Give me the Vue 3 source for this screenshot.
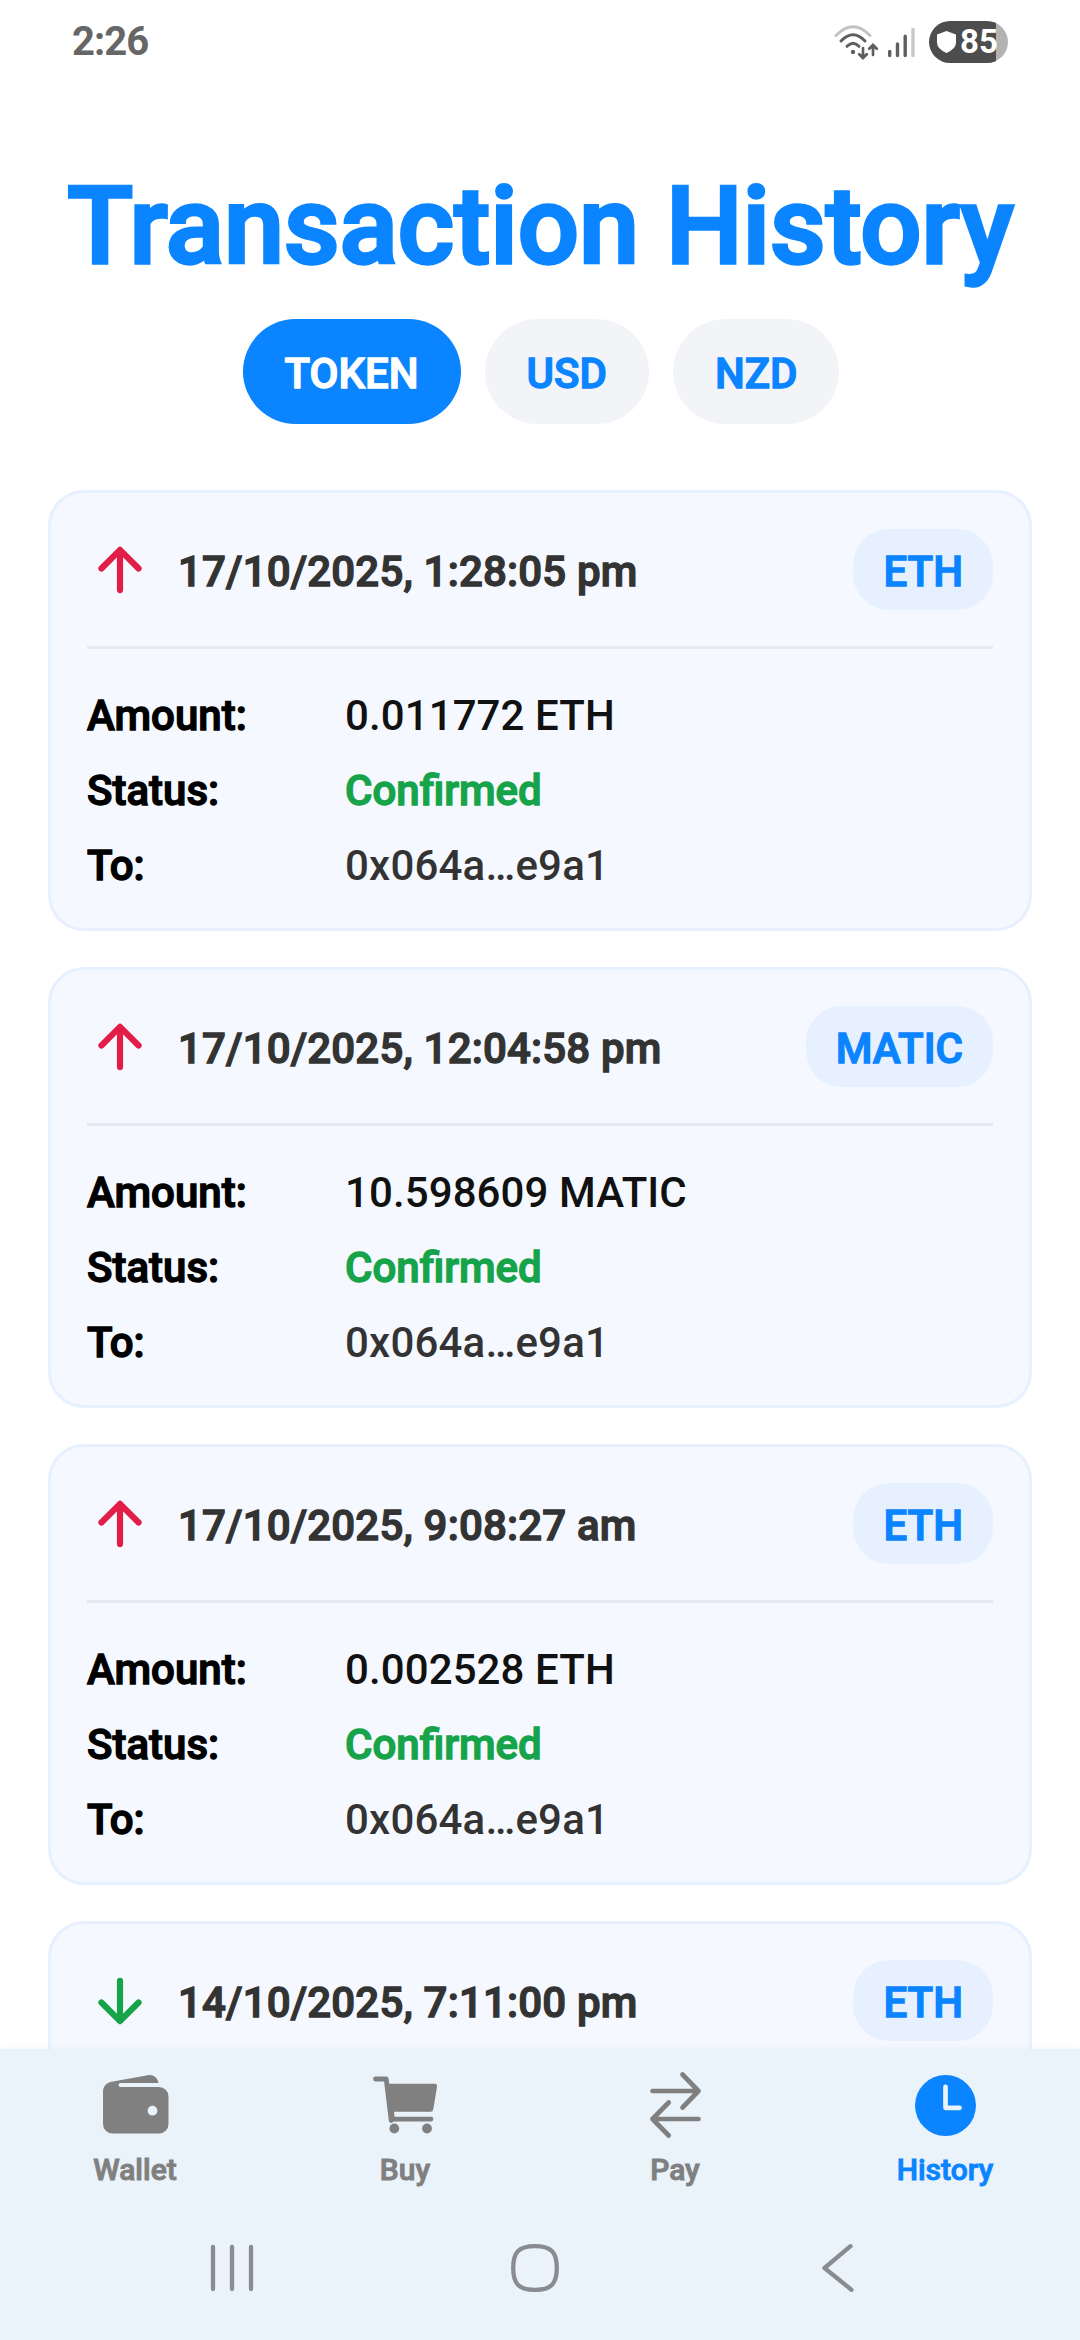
<script setup>
import { ref } from 'vue'

const filters = ['TOKEN', 'USD', 'NZD']
const activeFilter = ref('TOKEN')
const activeTab = ref('History')

const transactions = [
  { id: 1, direction: 'out', date: '17/10/2025, 1:28:05 pm', token: 'ETH', amount: '0.011772', status: 'Confirmed', to: '0x064a…e9a1' },
  { id: 2, direction: 'out', date: '17/10/2025, 12:04:58 pm', token: 'MATIC', amount: '10.598609', status: 'Confirmed', to: '0x064a…e9a1' },
  { id: 3, direction: 'out', date: '17/10/2025, 9:08:27 am', token: 'ETH', amount: '0.002528', status: 'Confirmed', to: '0x064a…e9a1' },
  { id: 4, direction: 'in', date: '14/10/2025, 7:11:00 pm', token: 'ETH' },
]

const tabs = ['Wallet', 'Buy', 'Pay', 'History']
</script>

<template>
  <div class="screen">
    <header class="status-bar">
      <span class="clock">2:26</span>
      <div class="status-icons">
        <svg class="wifi" viewBox="0 0 46 36" fill="none" stroke-linecap="round">
          <path d="M2 11.5Q19 -6 36 11.5" stroke="#c2c2c2" stroke-width="3" />
          <path d="M7 17Q19 4.5 31 17" stroke="#5f5f5f" stroke-width="3" />
          <path d="M13 22.3Q19 16.3 25 22.3" stroke="#5f5f5f" stroke-width="3" />
          <circle cx="19" cy="28" r="2.2" fill="#5f5f5f" />
          <path d="M29 24v9.5M25.2 30.2l3.8 3.8 3.8-3.8M39 31v-9.5M35.2 24.8l3.8-3.8 3.8 3.8" stroke="#5f5f5f" stroke-width="2.7" />
        </svg>
        <svg class="signal" viewBox="0 0 28 32" stroke-width="3.4" stroke-linecap="round">
          <path d="M2.7 25.5v4M10.5 18v11.5M18.2 10.3v19.2" stroke="#5f5f5f" />
          <path d="M26 3.5v26" stroke="#c8c8c8" />
        </svg>
        <div class="battery">
          <svg class="shield" viewBox="0 0 19 22">
            <path d="M9.5 0L19 3.4v8.2q0 6.4-9.5 10.4Q0 18 0 11.6V3.4z" fill="#fff" />
          </svg>
          <span>85</span>
        </div>
      </div>
    </header>

    <main class="content">
      <h1 class="title strong">Transaction History</h1>

      <div class="filters">
        <button
          v-for="filter in filters"
          :key="filter"
          type="button"
          class="filter strong"
          :class="{ active: filter === activeFilter }"
          @click="activeFilter = filter"
        >
          {{ filter }}
        </button>
      </div>

      <div class="list">
        <article v-for="tx in transactions" :key="tx.id" class="card">
          <div class="card-head">
            <svg class="arrow" :class="tx.direction" viewBox="0 0 512 512">
              <path v-if="tx.direction === 'out'" d="M112 244l144-144 144 144M256 120v292" />
              <path v-else d="M112 268l144 144 144-144M256 392V100" />
            </svg>
            <span class="date strong">{{ tx.date }}</span>
            <span class="token strong">{{ tx.token }}</span>
          </div>
          <dl v-if="tx.amount" class="details">
            <dt class="strong">Amount:</dt>
            <dd class="amount">{{ tx.amount }} {{ tx.token }}</dd>
            <dt class="strong">Status:</dt>
            <dd class="confirmed strong">{{ tx.status }}</dd>
            <dt class="strong">To:</dt>
            <dd class="address">{{ tx.to }}</dd>
          </dl>
        </article>
      </div>
    </main>

    <footer class="bottom">
      <nav class="tabs">
        <button
          v-for="tab in tabs"
          :key="tab"
          type="button"
          class="tab"
          :class="{ active: tab === activeTab }"
          @click="activeTab = tab"
        >
          <svg v-if="tab === 'Wallet'" class="tab-icon" viewBox="0 0 75 75" fill="currentColor">
            <path d="M5 23.5c0-5 3.5-9 8.5-9.8L50 7.2c5-.8 9.5 2.3 10.5 7.8H22.5a2 2 0 0 0 0 4H61a9.5 9.5 0 0 1 9.5 9.5v27.5a9.5 9.5 0 0 1-9.5 9.5H14.5a9.5 9.5 0 0 1-9.5-9.5zM54.5 37.8a4.9 4.9 0 1 0 0 9.8 4.9 4.9 0 0 0 0-9.8z" />
          </svg>
          <svg v-else-if="tab === 'Buy'" class="tab-icon" viewBox="0 0 75 75" fill="currentColor">
            <path d="M7.5 11h10.7l5 41.5" fill="none" stroke="currentColor" stroke-width="4.8" stroke-linecap="round" stroke-linejoin="round" />
            <path d="M18 15.8h48.5q2.9 0 2.5 3l-3.7 22.5q-.4 2.5-2.8 2.5H26l.6 4.9h36.5a2.3 2.3 0 0 1 0 4.7H21.9z" />
            <circle cx="26.3" cy="60.5" r="4.9" />
            <circle cx="59" cy="60.5" r="4.9" />
          </svg>
          <svg v-else-if="tab === 'Pay'" class="tab-icon" viewBox="0 0 75 75" fill="none" stroke="currentColor" stroke-width="4.7" stroke-linecap="round" stroke-linejoin="round">
            <path d="M44.5 6.5L60.5 23 44.5 39.5M14.5 23h46M30.7 34.5L14.5 51l16.2 16.5M14.5 51h46" />
          </svg>
          <svg v-else class="tab-icon" viewBox="0 0 512 512">
            <circle cx="256" cy="256" r="208" fill="currentColor" />
            <path d="M256 128v144h96" fill="none" stroke="#eaf2fa" stroke-width="32" stroke-linecap="round" stroke-linejoin="round" />
          </svg>
          <span class="tab-label strong">{{ tab }}</span>
        </button>
      </nav>

      <div class="system-nav">
        <svg class="sys-icon" viewBox="0 0 54 54">
          <path d="M8 6v42M27 6v42M46 6v42" />
        </svg>
        <svg class="sys-icon" viewBox="0 0 54 54">
          <path d="M27 5.2C43 5.2 48.8 11 48.8 27S43 48.8 27 48.8 5.2 43 5.2 27 11 5.2 27 5.2z" />
        </svg>
        <svg class="sys-icon" viewBox="0 0 54 54">
          <path d="M40.5 5.2L14.5 27l27 21.8" />
        </svg>
      </div>
    </footer>
  </div>
</template>

<style>
body {
  background: #fff;
}
</style>

<style scoped>
.screen {
  display: flex;
  flex-direction: column;
  width: 1080px;
  height: 2340px;
  overflow: hidden;
  background: #fff;
  font-family: Roboto, sans-serif;
  font-size: 42px;
  font-weight: 500;
  line-height: 53px;
}

button {
  border: 0;
  font: inherit;
}

/* medium weight, thickened the way Android fakes bold */
.strong {
  font-weight: 500;
  -webkit-text-stroke: 0.031em currentColor;
}

.status-bar {
  display: flex;
  align-items: center;
  justify-content: space-between;
  flex-shrink: 0;
  height: 84px;
  padding: 0 72px;
  box-sizing: border-box;
}

.clock {
  color: #666;
  font-size: 40px;
  font-weight: 700;
  line-height: 48px;
  letter-spacing: -1px;
}

.status-icons {
  display: flex;
  align-items: center;
}

.wifi {
  width: 46px;
  height: 36px;
}

.signal {
  width: 28px;
  height: 32px;
  margin-left: 7px;
}

.battery {
  display: flex;
  align-items: center;
  gap: 4px;
  width: 79px;
  height: 42px;
  margin-left: 14px;
  padding-left: 8px;
  box-sizing: border-box;
  border-radius: 21px;
  background: linear-gradient(to right, #4d4d4d 67px, #b3b3b3 67px);
  color: #fff;
  font-size: 33px;
  font-weight: 700;
  line-height: 42px;
}

.shield {
  width: 19px;
  height: 22px;
}

.content {
  flex: 1;
  min-height: 0;
  overflow: hidden;
}

.title {
  margin: 76px 0 27px;
  padding-left: 1px;
  color: #0a84ff;
  font-size: 108px;
  line-height: 132px;
  text-align: center;
  white-space: nowrap;
}

.filters {
  display: flex;
  justify-content: center;
  gap: 24px;
  padding-left: 2px;
}

.filter {
  height: 105px;
  padding: 28px 42px 24px;
  border-radius: 60px;
  background: #f2f4f7;
  color: #0a84ff;
}

.filter.active {
  background: #0a84ff;
  color: #fff;
}

.list {
  display: flex;
  flex-direction: column;
  gap: 36px;
  padding: 66px 48px 0;
}

.card {
  padding: 36px;
  border: 3px solid #e6f0ff;
  border-radius: 36px;
  background: #f5f9ff;
}

.card-head {
  display: flex;
  align-items: center;
  padding-bottom: 36px;
  border-bottom: 3px solid #e5e9f2;
}

.arrow {
  width: 66px;
  height: 66px;
  fill: none;
  stroke-width: 48;
  stroke-linecap: round;
  stroke-linejoin: round;
}

.arrow.out {
  stroke: #e11d48;
}

.arrow.in {
  stroke: #16a34a;
}

.date {
  flex: 1;
  margin-left: 25px;
  padding-top: 4px;
  color: #333;
  letter-spacing: 0.17px;
}

.token {
  padding: 16px 30px 12px;
  border-radius: 36px;
  background: #e6f0ff;
  color: #0a84ff;
}

.details {
  display: grid;
  grid-template-columns: 258px 1fr;
  row-gap: 18px;
  margin: 36px 0 0;
}

.details dt,
.details dd {
  margin: 0;
  padding-top: 4px;
}

.details dt {
  color: #000;
}

.details .amount {
  color: #111;
  letter-spacing: 0.1px;
}

.details .confirmed {
  color: #16a34a;
}

.details .address {
  color: #333;
  letter-spacing: 0.2px;
}

.bottom {
  position: relative;
  flex-shrink: 0;
  height: 291px;
  background: #eaf2fa;
  box-shadow: 0 0 6px rgba(0, 0, 0, 0.06);
}

.tabs {
  display: grid;
  grid-template-columns: repeat(4, 1fr);
}

.tab {
  display: flex;
  flex-direction: column;
  align-items: center;
  padding: 19px 0 0;
  background: none;
  color: #808080;
}

.tab.active {
  color: #0a84ff;
}

.tab-icon {
  width: 75px;
  height: 75px;
}

.tab-label {
  margin-top: 9px;
  font-size: 30px;
  line-height: 36px;
}

.system-nav {
  display: flex;
  justify-content: space-between;
  padding: 53px 216px 0 205px;
}

.sys-icon {
  width: 54px;
  height: 54px;
  fill: none;
  stroke: #888c90;
  stroke-width: 4.3;
  stroke-linecap: round;
  stroke-linejoin: round;
}
</style>
